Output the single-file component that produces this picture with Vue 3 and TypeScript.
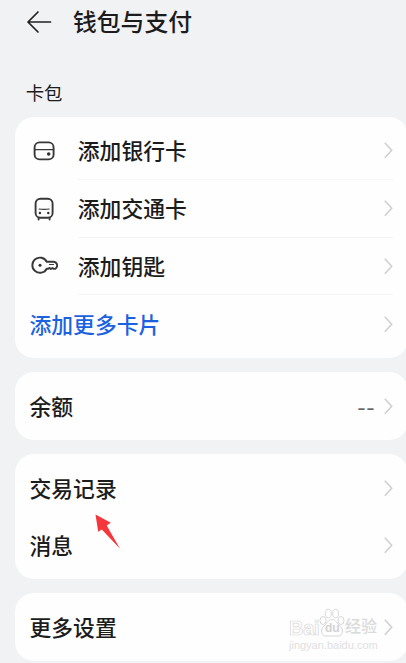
<script setup lang="ts">
type IconName = 'bank' | 'transit' | 'key'

interface Row {
  label: string
  icon?: IconName
  value?: string
  link?: boolean
}

const groups: Row[][] = [
  [
    { label: '添加银行卡', icon: 'bank' },
    { label: '添加交通卡', icon: 'transit' },
    { label: '添加钥匙', icon: 'key' },
    { label: '添加更多卡片', link: true },
  ],
  [{ label: '余额', value: '--' }],
  [{ label: '交易记录' }, { label: '消息' }],
  [{ label: '更多设置' }],
]
</script>

<template>
  <main class="screen">
    <header class="header">
      <svg class="back" viewBox="0 0 26 24" aria-hidden="true">
        <path d="M24.5 12H2M12 2 2 12l10 10" />
      </svg>
      <h1 class="title">钱包与支付</h1>
    </header>

    <h2 class="section">卡包</h2>

    <div class="groups">
      <section v-for="(rows, g) in groups" :key="g" class="card">
        <div v-for="row in rows" :key="row.label" class="row" :class="{ link: row.link }">
          <span v-if="row.icon" class="icon">
            <svg v-if="row.icon === 'bank'" viewBox="0 0 28 28">
              <rect x="4.6" y="5.4" width="19" height="17" rx="5" />
              <path class="thin" d="M4.6 12.6H23.6" />
              <circle class="dot" cx="18.7" cy="17" r="1.8" />
            </svg>
            <svg v-else-if="row.icon === 'transit'" viewBox="0 0 28 28">
              <rect x="5.6" y="3.8" width="17" height="19" rx="4.8" />
              <path class="thin" d="M9 14q5 .8 10.2 0" />
              <path d="M8.6 23.2v1.4M19.6 23.2v1.4" />
              <circle class="dot" cx="9.9" cy="18" r="1.2" />
              <circle class="dot" cx="18.3" cy="18" r="1.2" />
            </svg>
            <svg v-else viewBox="0 0 28 28">
              <path
                d="M16.7 9.7A7.6 7.6 0 1 0 16.7 16.7H18.4l1.2-.8 1.3 1.2 1.6-1.2 1.3 1h1.400Q27.200 15.600 27.200 13.200 26.600 9.700 23.200 9.700Z"
              />
              <path class="thin" d="M19.500 12.500h4" />
              <circle class="dot" cx="10" cy="13.2" r="1.5" />
            </svg>
          </span>
          <div class="content">
            <span class="label">{{ row.label }}</span>
            <span v-if="row.value" class="value">{{ row.value }}</span>
            <svg class="chevron" viewBox="0 0 9 18" aria-hidden="true">
              <path d="M.8 1.8 7.7 9.3l-6.900 7.400" />
            </svg>
          </div>
        </div>
      </section>
    </div>

    <svg class="pointer" viewBox="0 0 26 36" aria-hidden="true">
      <path d="M.5.4 15.800 8.800l-4.100 2.600L25 34.800 6.800 15.600 3.200 17.800Z" />
    </svg>

    <div class="watermark" aria-hidden="true">
      <div class="brand">
        <span class="latin">Bai</span>
        <span class="paw">
          <svg viewBox="0 0 26 29">
            <ellipse cx="4" cy="12.5" rx="3" ry="4" />
            <ellipse cx="9.3" cy="5.5" rx="3" ry="4.3" />
            <ellipse cx="16.6" cy="5.5" rx="3" ry="4.3" />
            <ellipse cx="22" cy="12.5" rx="3" ry="4" />
            <path d="M13 11.500c-4 0-5 4-8 6.500C1 21.500 2 27.500 6.500 28h13c4.500-.5 5.500-6.500 1.500-10-3-2.500-4-6.500-8-6.500Z" />
          </svg>
          <span class="du">du</span>
        </span>
        <span class="cn">经验</span>
      </div>
      <div class="site">jingyan.baidu.com</div>
    </div>
  </main>
</template>

<style>
body {
  background: #f1f2f4;
}
</style>

<style scoped>
.screen {
  position: relative;
  box-sizing: border-box;
  height: 663px;
  overflow: hidden;
  background: #f1f2f4;
  color: #1c1c1c;
  font-family: 'Noto Sans CJK SC', sans-serif;
}

.header {
  display: flex;
  align-items: center;
  height: 43px;
  padding-left: 26px;
}

.back {
  width: 26px;
  height: 24px;
  margin-right: 21px;
  fill: none;
  stroke: #222;
  stroke-width: 1.7;
  stroke-linecap: round;
  stroke-linejoin: round;
}

.title {
  margin: 0;
  padding-bottom: 2px;
  font-size: 23.8px;
  font-weight: 500;
  line-height: 41px;
}

.section {
  margin: 0;
  padding: 36.5px 0 12.5px 25.7px;
  font-size: 18.4px;
  font-weight: 400;
  line-height: 25px;
}

.groups {
  display: flex;
  flex-direction: column;
  gap: 14.2px;
  margin-right: -2px;
  padding-left: 15px;
}

.card {
  padding: 5px 15.5px 4.7px 14.5px;
  border-radius: 19px;
  background: #fefefe;
}

.row {
  display: flex;
  height: 57.8px;
}

.icon {
  display: flex;
  align-items: center;
  width: 48.3px;
}

.icon svg {
  width: 28px;
  height: 28px;
  fill: none;
  stroke: #383838;
  stroke-width: 1.9;
  stroke-linecap: round;
  stroke-linejoin: round;
}

.icon .thin {
  stroke-width: 1.1;
}

.icon .dot {
  fill: #303030;
  stroke: none;
}

.content {
  display: flex;
  flex: 1;
  align-items: center;
  box-sizing: border-box;
}

.icon + .content {
  border-bottom: 1px solid #f6f6f6;
}

.label {
  flex: 1;
  font-size: 21.8px;
  font-weight: 500;
  line-height: 32px;
}

.link .label {
  color: #1b62e0;
}

.value {
  margin-right: 8px;
  color: #666;
  font-size: 24px;
  line-height: 32px;
  letter-spacing: 0.8px;
}

.chevron {
  width: 9px;
  height: 18px;
  fill: none;
  stroke: #d0d0d0;
  stroke-width: 1.6;
}

.pointer {
  position: absolute;
  top: 514px;
  left: 95px;
  width: 26px;
  height: 36px;
  fill: #f5363b;
}

.watermark {
  position: absolute;
  top: 607px;
  left: 289px;
  width: 90px;
  color: #fff;
  font-family: 'Liberation Sans', 'Noto Sans CJK SC', sans-serif;
  -webkit-text-stroke: 0.7px #d8d8d8;
}

.brand {
  display: flex;
  align-items: flex-end;
  height: 32px;
  white-space: nowrap;
}

.latin {
  width: 30px;
  font-size: 20px;
  font-weight: 700;
  line-height: 22px;
  letter-spacing: -0.3px;
}

.paw {
  position: relative;
  width: 26px;
  height: 29px;
  margin-bottom: 2px;
}

.paw svg {
  display: block;
  width: 26px;
  height: 29px;
  fill: #fefefe;
  stroke: #d8d8d8;
  stroke-width: 1;
}

.du {
  position: absolute;
  top: 13px;
  left: 6px;
  color: #d2d2d2;
  font-size: 12px;
  font-weight: 700;
  line-height: 14px;
  -webkit-text-stroke: 0;
}

.cn {
  color: #dadada;
  font-size: 16px;
  font-weight: 500;
  line-height: 24px;
  -webkit-text-stroke: 0;
}

.site {
  color: #e0e0e0;
  font-size: 11px;
  line-height: 13px;
  -webkit-text-stroke: 0;
}
</style>
